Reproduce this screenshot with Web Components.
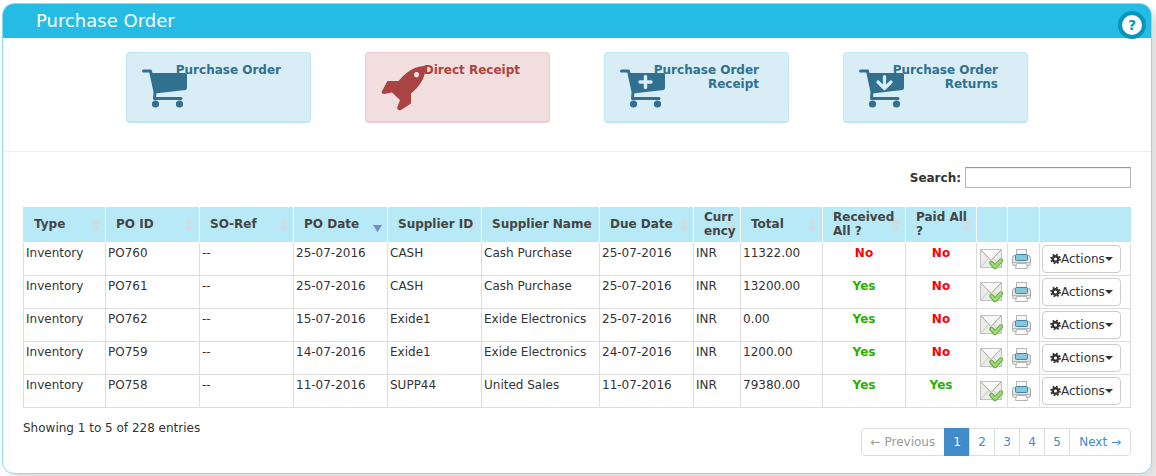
<!DOCTYPE html>
<html lang="en">
<head>
<meta charset="utf-8">
<title>Purchase Order</title>
<style>
body { margin: 0; background: #fff; font: 12px/20px "DejaVu Sans", Verdana, sans-serif; color: #333; }
</style>
</head>
<body>
<po-panel heading="Purchase Order">
  <po-tiles>
    <po-tile icon="cart">Purchase Order</po-tile>
    <po-tile icon="rocket" tone="danger">Direct Receipt</po-tile>
    <po-tile icon="cart-plus">Purchase Order Receipt</po-tile>
    <po-tile icon="cart-down">Purchase Order Returns</po-tile>
  </po-tiles>
  <po-search></po-search>
  <po-table></po-table>
  <po-footer>Showing 1 to 5 of 228 entries<po-pager slot="pager"></po-pager></po-footer>
</po-panel>
<script>
function define(name, render) {
  customElements.define(name, class extends HTMLElement {
    connectedCallback() {
      if (this.shadowRoot) return;
      this.attachShadow({ mode: 'open' }).innerHTML = render(this);
    }
  });
}

define('po-panel', el => `
<style>
:host { display: block; margin: 3px 4px 2px 2px; border: 1px solid #8adcec; border-radius: 12px; background: #fff; box-shadow: 8px 8px 8px #e0e0e0; }
header { display: flex; align-items: center; justify-content: space-between; height: 34px; padding: 0 5px 0 33px; background: #25bbe2; border-radius: 11px 11px 0 0; }
h1 { margin: 0; font-size: 18px; line-height: 34px; font-weight: normal; color: #fff; }
button { box-sizing: border-box; width: 28px; height: 28px; padding: 0; margin-top: 8px; border: 4px solid #0596bf; border-radius: 50%; background: #fff; color: #0596bf; font: bold 14px/20px "DejaVu Sans", sans-serif; }
</style>
<header><h1>${el.getAttribute('heading')}</h1><button type="button" aria-label="Help">?</button></header>
<slot></slot>`);

define('po-tiles', () => `
<style>
:host { display: flex; justify-content: center; gap: 54px; padding: 14px 0 28px; border-bottom: 1px solid #eee; }
</style>
<slot></slot>`);

const cart = extra => `<path fill="none" stroke="currentColor" stroke-width="3" stroke-linecap="round" stroke-linejoin="round" d="M1.500 5H8.500l4.500 21-0.500 6.500H39"/><path fill="currentColor" d="M9 7H43.500q1.500 0 1.500 1.500V22q0 1.500-1.500 2L13 27.500Z"/><circle cx="13.500" cy="38" r="3.600" fill="currentColor"/><circle cx="37.500" cy="38" r="3.600" fill="currentColor"/>${extra}`;
const art = {
  'cart': cart(''),
  'cart-plus': cart('<path fill="none" stroke="#d9edf7" stroke-width="3.400" stroke-linecap="round" d="M25.500 10.500V21.500M20 16H31"/>'),
  'cart-down': cart('<path fill="none" stroke="#d9edf7" stroke-width="3.200" stroke-linecap="round" stroke-linejoin="round" d="M25.500 10.500V22M19 16L25.500 22.500L32 16"/>'),
  'rocket': '<path fill="currentColor" fill-rule="evenodd" d="M44 0Q46 14 30 27.500V37.500L20 44Q17 45 16 42L19 34 11 26.500 3 28Q0 28 1 25L6.500 15H17.500Q30 0 44 0ZM35.500 6a2.700 2.700 0 1 0 .100 0Z"/>'
};
define('po-tile', el => `
<style>
:host { display: block; flex: 0 0 185px; color: #31708f; --bg: #d9edf7; --line: #bce8f1; }
:host([tone=danger]) { color: #a94442; --bg: #f2dede; --line: #ebccd1; }
button { display: flex; box-sizing: border-box; width: 100%; height: 71px; padding: 10px 29px 0 15px; align-items: flex-start; border: 1px solid var(--line); border-bottom-width: 2px; border-radius: 4px; background: var(--bg); color: inherit; font: bold 12px/14px "DejaVu Sans", Verdana, sans-serif; text-align: right; }
svg { flex: none; width: 46px; height: 45px; margin: 3px -14px 0 0; }
:host([tone=danger]) svg { margin-right: -4px; }
span { flex: 1; }
</style>
<button type="button"><svg viewBox="0 0 46 45" aria-hidden="true">${art[el.getAttribute('icon')]}</svg><span><slot></slot></span></button>`);

define('po-search', () => `
<style>
:host { display: flex; justify-content: flex-end; align-items: center; gap: 4px; padding: 15px 20px 0; }
label { font-weight: bold; }
input { box-sizing: border-box; width: 166px; height: 21px; padding: 1px 4px; border: 1px solid #b5b5b5; border-top-color: #999; background: #fff; font: inherit; box-shadow: inset 0 1px 1px #eee; }
</style>
<label for="q">Search:</label><input id="q" type="text">`);

const mail = `<svg width="24" height="24" viewBox="0 0 24 24" aria-hidden="true"><rect x="1.500" y="2.500" width="21" height="18" fill="#ececea" stroke="#c2c2be"/><path d="M2 20L9.500 11.500M22 20L14.500 11.500" stroke="#c4c4c4" fill="none"/><path d="M2 3L12 13.500 22 3" fill="#f8f8f6" stroke="#a3a3a0"/><path d="M12.500 16L16 20 22 13.500" fill="none" stroke="#62a33f" stroke-width="4.400" stroke-linejoin="round" stroke-linecap="round"/><path d="M12.500 16L16 20 22 13.500" fill="none" stroke="#9bdc70" stroke-width="2.600" stroke-linejoin="round" stroke-linecap="round"/></svg>`;
const printer = `<svg width="24" height="24" viewBox="0 0 24 24" aria-hidden="true"><rect x="6.500" y="2.500" width="10" height="6" fill="#f6f6f6" stroke="#b8b8b8"/><rect x="2.500" y="8.500" width="18" height="10" rx="2" fill="#e6e6e8" stroke="#aaa"/><rect x="5.500" y="7.500" width="12" height="6" rx="1" fill="#84c8de" stroke="#3f84a2"/><path d="M3 15.500H20" stroke="#b4b4b4"/><path d="M6.500 16.500H16.500L17.500 21.500H5.500Z" fill="#fafafa" stroke="#b5b5b5"/></svg>`;
const gear = `<svg width="11" height="12" viewBox="0 0 12 12" aria-hidden="true"><g fill="none" stroke="#333"><circle cx="6" cy="6" r="3" stroke-width="2.600"/><circle cx="6" cy="6" r="4.800" stroke-width="2" stroke-dasharray="1.900 1.870"/></g></svg>`;
const cols = [82, 94, 94, 94, 94, 118, 94, 47, 82, 83, 71, 31, 32, 91];
const heads = ['Type', 'PO ID', 'SO-Ref', 'PO Date', 'Supplier ID', 'Supplier Name', 'Due Date', 'Curr<br>ency', 'Total', 'Received<br>All ?', 'Paid All<br>?', '', '', ''];
const rows = [
  ['PO760', '25-07-2016', 'CASH', 'Cash Purchase', '25-07-2016', '11322.00', 'No', 'No'],
  ['PO761', '25-07-2016', 'CASH', 'Cash Purchase', '25-07-2016', '13200.00', 'Yes', 'No'],
  ['PO762', '15-07-2016', 'Exide1', 'Exide Electronics', '25-07-2016', '0.00', 'Yes', 'No'],
  ['PO759', '14-07-2016', 'Exide1', 'Exide Electronics', '24-07-2016', '1200.00', 'Yes', 'No'],
  ['PO758', '11-07-2016', 'SUPP44', 'United Sales', '11-07-2016', '79380.00', 'Yes', 'Yes']
];
const sorter = i => i > 10 ? '' : i === 3
  ? '<svg class="sort" width="9" height="14" viewBox="0 0 9 14" aria-hidden="true"><path d="M0 7H9L4.500 14Z" fill="#7a86d8"/></svg>'
  : '<svg class="sort" width="9" height="14" viewBox="0 0 9 14" aria-hidden="true"><path d="M4.500 0L9 6H0ZM0 7.500H9L4.500 14Z" fill="#d6dadc"/></svg>';
const flag = v => `<td class="flag ${v.toLowerCase()}">${v}</td>`;
define('po-table', () => `
<style>
:host { display: block; padding: 19px 20px 0; }
table { width: 100%; table-layout: fixed; border-collapse: collapse; }
th { position: relative; height: 32px; padding: 0 0 2px 10px; background: #b7e9f6; border: 1px solid #fff; border-top-color: #ddd; text-align: left; line-height: 14px; color: #444; white-space: nowrap; }
th:first-child { border-left-color: #b7e9f6; }
th:last-child { border-right-color: #b7e9f6; }
th span { position: relative; }
.sort { position: absolute; right: 5px; top: 10px; }
td { height: 28px; padding: 2px; border: 1px solid #ddd; vertical-align: top; white-space: nowrap; line-height: 16px; }
tbody tr:first-child td { border-top-color: #fff; }
td svg { display: block; }
.icon { vertical-align: middle; }
.flag { text-align: center; font-weight: bold; }
.yes { color: #27b000; }
.no { color: #f00; }
button { display: flex; align-items: center; box-sizing: border-box; width: 79px; height: 28px; padding: 0 7px; border: 1px solid #ccc; border-radius: 4px; background: #fff; color: #333; font: 12px/18px "DejaVu Sans", Verdana, sans-serif; }
i { border: 4px solid transparent; border-top-color: #333; border-bottom: 0; }
</style>
<table>
<colgroup>${cols.map(w => `<col style="width:${w}px">`).join('')}</colgroup>
<thead><tr>${heads.map((h, i) => `<th>${sorter(i)}<span>${h}</span></th>`).join('')}</tr></thead>
<tbody>${rows.map(r => `<tr><td>Inventory</td><td>${r[0]}</td><td>--</td><td>${r[1]}</td><td>${r[2]}</td><td>${r[3]}</td><td>${r[4]}</td><td>INR</td><td>${r[5]}</td>${flag(r[6])}${flag(r[7])}<td class="icon">${mail}</td><td class="icon">${printer}</td><td><button type="button">${gear}Actions<i></i></button></td></tr>`).join('')}</tbody>
</table>`);

define('po-footer', () => `
<style>
:host { display: flex; justify-content: space-between; align-items: flex-start; padding: 10px 20px 17px; }
</style>
<span><slot></slot></span><slot name="pager"></slot>`);

define('po-pager', () => `
<style>
:host { display: block; margin-top: 10px; }
nav { display: flex; }
a { box-sizing: border-box; height: 28px; width: 26px; margin-left: -1px; border: 1px solid #ddd; background: #fff; color: #428bca; line-height: 26px; text-align: center; text-decoration: none; white-space: nowrap; }
a:first-child { width: auto; padding: 0 9px; border-radius: 4px 0 0 4px; color: #999; }
a:last-child { width: auto; padding: 0 9px; border-radius: 0 4px 4px 0; }
a.on { background: #428bca; border-color: #428bca; color: #fff; }
</style>
<nav aria-label="Pages"><a href="#">← Previous</a><a href="#" class="on">1</a><a href="#">2</a><a href="#">3</a><a href="#">4</a><a href="#">5</a><a href="#">Next →</a></nav>`);
</script>
</body>
</html>
